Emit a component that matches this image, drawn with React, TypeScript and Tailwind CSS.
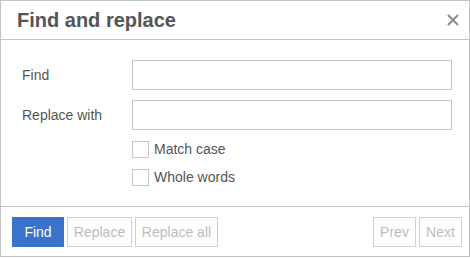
import React from 'react'

const LABEL = 'text-[14px] text-[#555]'

function Row({ label, top }: { label: string; top?: boolean }) {
  return (
    <div className={`flex items-center h-[30px] ${top ? '' : 'mt-[10px]'}`}>
      <span className={`${LABEL} w-[110px]`}>{label}</span>
      <input className="w-[320px] h-[30px] border border-[#c5c5c5] bg-white outline-none px-1 text-[14px]" />
    </div>
  )
}

function Check({ label }: { label: string }) {
  return (
    <label className="flex items-center h-[18px] ml-[110px]">
      <span className="w-[17px] h-[17px] border border-[#c5c5c5] bg-white" />
      <span className={`${LABEL} ml-[5px]`}>{label}</span>
    </label>
  )
}

const GHOST = 'h-[30px] border border-[#d0d0d0] bg-white text-[14px] text-[#bcbcbc]'

export default function App() {
  return (
    <div className="w-[470px] h-[258px] bg-white" style={{ fontFamily: '"Liberation Sans", Arial, sans-serif' }}>
      <div className="w-[470px] h-[257px] border border-[#c5c5c5] flex flex-col">
        {/* header */}
        <div className="h-[39px] border-b border-[#c5c5c5] flex items-center justify-between pl-[16px] pr-[10px]">
          <h1 className="text-[20px] font-bold text-[#555] leading-none">Find and replace</h1>
          <svg width="12" height="12" viewBox="0 0 12 12">
            <path d="M1 1 L11 11 M11 1 L1 11" stroke="#8c8c8c" strokeWidth="2" />
          </svg>
        </div>

        {/* body */}
        <div className="flex-1 pt-[20px] pl-[21px]">
          <Row label="Find" top />
          <Row label="Replace with" />
          <div className="mt-[10px] flex flex-col gap-[10px]">
            <Check label="Match case" />
            <Check label="Whole words" />
          </div>
        </div>

        {/* footer */}
        <div className="h-[50px] border-t border-[#c5c5c5] flex items-start justify-between pt-[10px] pl-[11px] pr-[7px]">
          <div className="flex gap-[3px]">
            <button className="w-[52px] h-[30px] bg-[#3a72cc] text-white text-[14px]">Find</button>
            <button className={`${GHOST} w-[65px]`}>Replace</button>
            <button className={`${GHOST} w-[83px]`}>Replace all</button>
          </div>
          <div className="flex gap-[3px]">
            <button className={`${GHOST} w-[43px]`}>Prev</button>
            <button className={`${GHOST} w-[43px]`}>Next</button>
          </div>
        </div>
      </div>
    </div>
  )
}
